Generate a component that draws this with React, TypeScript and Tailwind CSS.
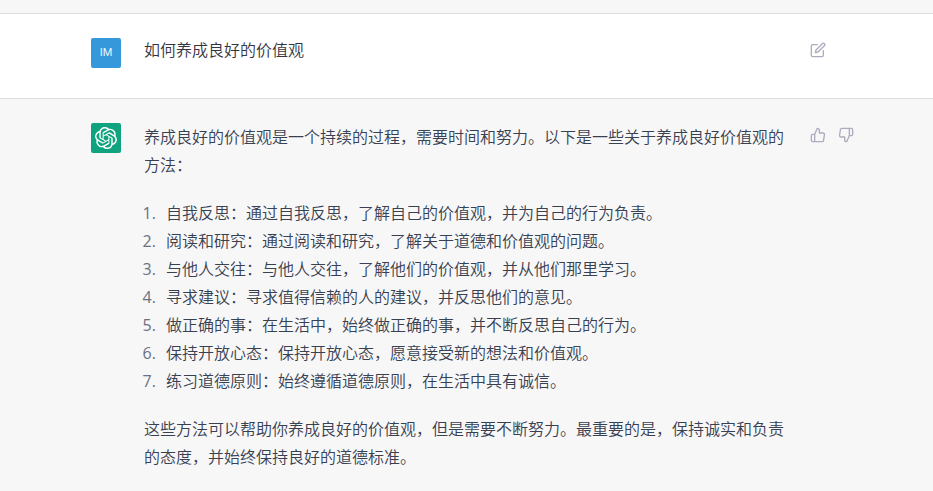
import React from 'react';
import { FiEdit, FiThumbsUp, FiThumbsDown } from 'react-icons/fi';
import { SiOpenai } from 'react-icons/si';

interface RowProps {
  avatar: React.ReactNode;
  actions: React.ReactNode;
  children: React.ReactNode;
  className?: string;
}

const tips = [
  '自我反思：通过自我反思，了解自己的价值观，并为自己的行为负责。',
  '阅读和研究：通过阅读和研究，了解关于道德和价值观的问题。',
  '与他人交往：与他人交往，了解他们的价值观，并从他们那里学习。',
  '寻求建议：寻求值得信赖的人的建议，并反思他们的意见。',
  '做正确的事：在生活中，始终做正确的事，并不断反思自己的行为。',
  '保持开放心态：保持开放心态，愿意接受新的想法和价值观。',
  '练习道德原则：始终遵循道德原则，在生活中具有诚信。',
];

const MessageRow: React.FC<RowProps> = ({ avatar, actions, children, className }) => (
  <div className={className}>
    <div className="mx-auto flex max-w-[799px] items-start py-6 pl-6 pr-3">
      {avatar}
      <div className="ml-[23px] min-w-0 flex-1">{children}</div>
      <div className="ml-6 mt-1 flex w-11 shrink-0 gap-3 text-[#acacbe]">{actions}</div>
    </div>
  </div>
);

const App: React.FC = () => {
  return (
    <main className="min-h-screen bg-[#f7f7f8] font-['Open_Sans','Noto_Sans_CJK_SC',sans-serif] text-base font-[350] leading-7 text-[#374151]">
      <div className="h-[14px] border-b border-[#dededf]" />

      {/* User message */}
      <MessageRow
        className="border-b border-[#dededf] bg-white text-[#343541]"
        avatar={
          <div className="flex h-[30px] w-[30px] shrink-0 items-center justify-center rounded-[2px] bg-[#3498db] font-['Roboto',sans-serif] text-[11px] font-normal text-white/90">
            IM
          </div>
        }
        actions={
          <button type="button" aria-label="编辑">
            <FiEdit className="h-4 w-4" />
          </button>
        }
      >
        <p className="min-h-9 leading-6">如何养成良好的价值观</p>
      </MessageRow>

      {/* Assistant message */}
      <MessageRow
        avatar={
          <div className="flex h-[30px] w-[30px] shrink-0 items-center justify-center rounded-[2px] bg-[#10a37f] text-white">
            <SiOpenai className="h-[22px] w-[22px]" />
          </div>
        }
        actions={
          <>
            <button type="button" aria-label="赞">
              <FiThumbsUp className="h-4 w-4" />
            </button>
            <button type="button" aria-label="踩">
              <FiThumbsDown className="h-4 w-4" />
            </button>
          </>
        }
      >
        <p>养成良好的价值观是一个持续的过程，需要时间和努力。以下是一些关于养成良好价值观的方法：</p>
        <ol className="my-5 list-decimal pl-4 marker:font-normal marker:text-gray-500">
          {tips.map(tip => (
            <li key={tip} className="pl-[6px]">{tip}</li>
          ))}
        </ol>
        <p>这些方法可以帮助你养成良好的价值观，但是需要不断努力。最重要的是，保持诚实和负责的态度，并始终保持良好的道德标准。</p>
      </MessageRow>
    </main>
  );
};

export default App;
